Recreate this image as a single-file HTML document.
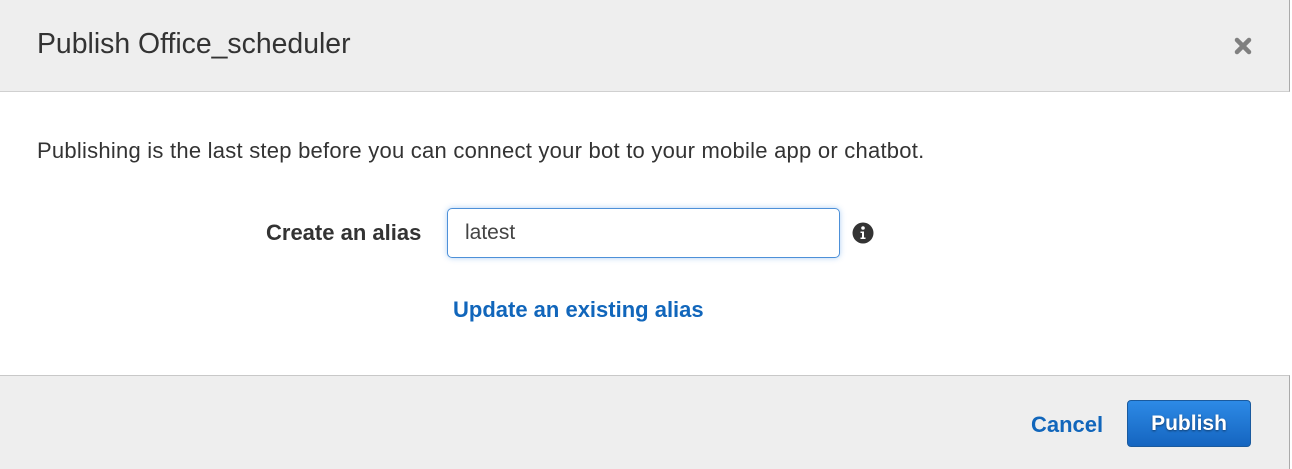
<!DOCTYPE html>
<html><head><style>
body{margin:0;width:1292px;height:468px;overflow:hidden;background:#fff;font-family:"Liberation Sans",Arial,sans-serif;position:relative}
.hdr{position:absolute;left:0;top:0;width:1289px;height:91px;background:#eeeeee;border-bottom:1px solid #d0d0d0;border-right:1px solid #aaa}
.hdr h1{position:absolute;left:37px;top:28px;margin:0;font-weight:normal;font-size:28.4px;color:#333}
.x{position:absolute;left:1234px;top:37px}
.p{position:absolute;left:37px;top:138px;font-size:22px;letter-spacing:0.24px;color:#333}
.lbl{position:absolute;left:266px;top:220px;font-size:22px;font-weight:bold;color:#333}
.inp{position:absolute;left:447px;top:208px;width:393px;height:50px;border:1px solid #4d90d8;border-radius:5px;box-shadow:0 0 6px rgba(80,150,230,.45);box-sizing:border-box}
.inp span{position:absolute;left:17px;top:12px;font-size:21px;color:#444}
.info{position:absolute;left:852px;top:222px}
.upd{position:absolute;left:453px;top:297px;font-size:22px;font-weight:bold;color:#1166bb}
.ftr{position:absolute;left:0;top:375px;width:1289px;height:93px;background:#eeeeee;border-top:1px solid #c8c8c8;border-right:1px solid #aaa}
.cancel{position:absolute;left:1031px;top:36px;font-size:22px;font-weight:bold;color:#1166bb}
.btn{position:absolute;left:1127px;top:24px;width:124px;height:47px;box-sizing:border-box;border:1px solid #1a5a9e;border-radius:4px;background:linear-gradient(#2d8ae6,#1565c0);color:#fff;font-weight:bold;font-size:21px;text-align:center;line-height:45px;text-shadow:0 1px 2px rgba(0,0,0,.5)}
</style></head><body>
<div class="hdr"><h1>Publish Office_scheduler</h1>
<svg class="x" width="18" height="18" viewBox="0 0 18 18"><path d="M3 3L15 15M15 3L3 15" stroke="#808080" stroke-width="4.5" stroke-linecap="round"/></svg></div>
<div class="p">Publishing is the last step before you can connect your bot to your mobile app or chatbot.</div>
<div class="lbl">Create an alias</div>
<div class="inp"><span>latest</span></div>
<svg class="info" width="22" height="22" viewBox="0 0 22 22"><circle cx="11" cy="11" r="10.5" fill="#333"/><circle cx="11" cy="6" r="1.8" fill="#fff"/><path d="M8.5 9.5h3.5v6h1.5v1.5h-5v-1.5h1.5v-4.5h-1.5z" fill="#fff"/></svg>
<div class="upd">Update an existing alias</div>
<div class="ftr"><div class="cancel">Cancel</div><div class="btn">Publish</div></div>
</body></html>
